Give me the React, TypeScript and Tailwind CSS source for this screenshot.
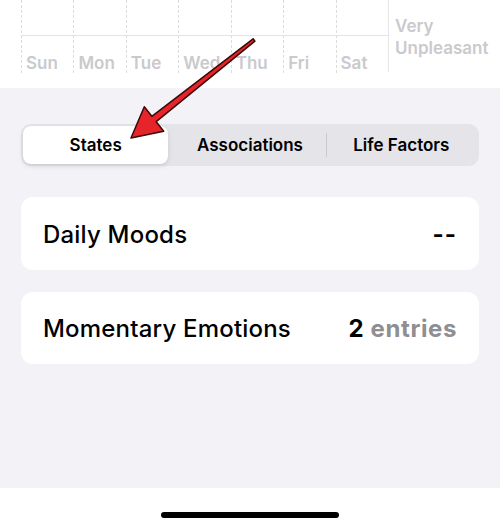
import React from "react";

const days = ["Sun", "Mon", "Tue", "Wed", "Thu", "Fri", "Sat"];

export default function App() {
  return (
    <div
      className="relative w-[500px] h-[529px] overflow-hidden bg-white text-black"
      style={{ fontFamily: "Inter, 'Noto Sans', sans-serif" }}
    >
      {/* Chart fragment */}
      <div className="h-[88px] flex pl-[21px] bg-white">
        <div className="grid grid-cols-7 w-[368px] h-[72px] border-r border-[#e6e6e9]">
          {days.map((d) => (
            <div key={d} className="flex flex-col border-l border-dashed border-[#dcdcdf]">
              <div className="h-[36px] border-b border-[#e3e3e6] -ml-px" />
              <div className="pl-[4px] pt-[17px] text-[17px] leading-[20px] font-semibold text-[#cacacd]">
                {d}
              </div>
            </div>
          ))}
        </div>
        <div className="pl-[6px] pt-[15px] text-[17px] leading-[22px] font-semibold text-[#cacacd]">
          <div>Very</div>
          <div>Unpleasant</div>
        </div>
      </div>

      {/* Gray content */}
      <div className="h-[400px] bg-[#f2f2f7] px-[21px] pt-[36px] flex flex-col">
        <div className="h-[42px] rounded-[10px] bg-[#e4e4e9] p-[2px] grid grid-cols-3 items-center">
          <div className="h-full pr-[6px]">
            <div className="h-full pt-[2px] rounded-[8px] bg-white shadow-[0_2px_5px_rgba(0,0,0,0.12)] flex items-center justify-center text-[17px] font-semibold">
              States
            </div>
          </div>
          <div className="h-full pt-[2px] flex items-center justify-center text-[17px] font-semibold">
            Associations
          </div>
          <div className="h-full pt-[2px] flex items-center justify-center text-[17px] font-semibold relative">
            <div className="absolute left-0 top-[7px] bottom-[7px] w-px bg-[#c9c9ce]" />
            Life Factors
          </div>
        </div>

        <div className="mt-[31px] h-[73px] pt-[2px] rounded-[12px] bg-white px-[22px] flex items-center justify-between">
          <span className="text-[24px] tracking-[0.2px] font-medium">Daily Moods</span>
          <span className="text-[24px] font-bold tracking-[1px]">--</span>
        </div>

        <div className="mt-[22px] h-[72px] pt-[2px] rounded-[12px] bg-white px-[22px] flex items-center justify-between">
          <span className="text-[24px] tracking-[0.2px] font-medium">Momentary Emotions</span>
          <span className="text-[24px] font-bold tracking-[0.6px]">
            2 <span className="text-[#8e8e93]">entries</span>
          </span>
        </div>
      </div>

      {/* Home indicator */}
      <div className="h-[41px] bg-white flex justify-center pt-[24px]">
        <div className="w-[178px] h-[6px] rounded-full bg-black" />
      </div>

      {/* Annotation arrow */}
      <svg
        className="absolute inset-0 pointer-events-none"
        width="500"
        height="529"
        viewBox="0 0 500 529"
      >
        <polygon
          points="131,138 144.3,106.8 151.8,116.3 253.1,38.8 254.9,41.2 156.2,121.7 163.7,131.2"
          fill="#e8242b"
          stroke="#3a0a0a"
          strokeWidth="1.5"
          strokeLinejoin="round"
        />
      </svg>
    </div>
  );
}
